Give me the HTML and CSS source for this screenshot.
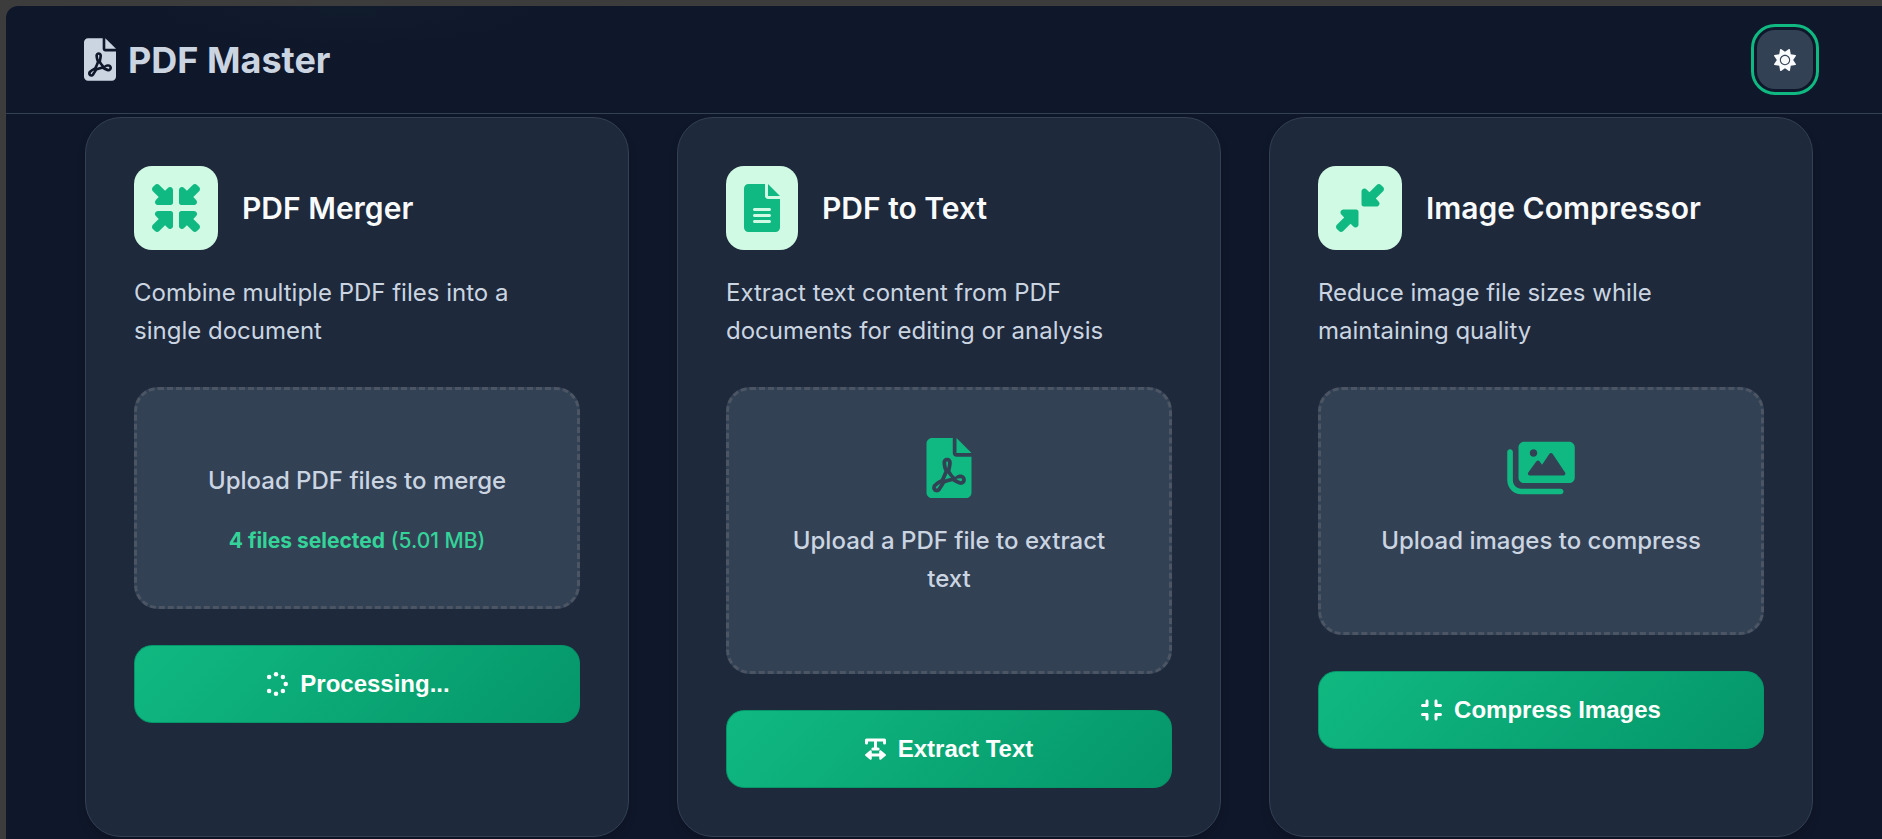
FILE: index.html
```html
<!DOCTYPE html>
<html lang="en">
<head>
<meta charset="utf-8">
<meta name="viewport" content="width=device-width, initial-scale=1">
<title>PDF Master</title>
<link rel="stylesheet" href="styles.css">
</head>
<body>
<svg class="sprite" aria-hidden="true">
  <symbol id="i-pdf" viewBox="0 0 384 512">
    <path d="M256 0v128h128L256 0z"/>
    <path fill-rule="evenodd" d="M224 128V0H48C21.500 0 0 21.500 0 48v416c0 26.500 21.500 48 48 48h288c26.500 0 48-21.500 48-48V160H256c-17.700 0-32-14.300-32-32zM292 312c24.260 0 44 19.740 44 44c0 24.670-18.940 44-43.130 44c-5.990 0-11.810-.95-17.220-2.800c-20.060-6.760-38.380-15.960-54.550-27.390c-23.880 5.110-45.460 11.520-64.310 19.100c-14.430 26.310-27.630 46.150-36.370 58.410C112.100 457.800 100.800 464 87.940 464C65.920 464 48 446.100 48 424.100c0-11.920 3.740-21.820 11.180-29.510c16.180-16.520 37.370-30.990 63.020-43.050c11.750-22.830 21.940-46.040 30.330-69.140C136.200 242.400 136 208.400 136 208c0-22.050 17.950-40 40-40c22.060 0 40 17.950 40 40c0 24.100-7.230 55.060-8.560 60.550c-1.020 4.030-2.040 8.030-3.160 12c10.070 19.310 23.100 36.570 39.170 51.440C260.500 314.800 275.100 312 292 312z"/>
    <path d="M184 208c0-4.400-3.600-8-8-8s-8 3.600-8 8c0 2.060.3 23.310 9.140 50.250C179.100 249.600 184 226.200 184 208zM80 422.400c0 9.660 10.470 11.970 14.380 6.380C99.270 421.900 108.800 408 120.100 388.600c-14.220 7.970-27.250 17.310-38.020 28.310C80.750 418.300 80 420.300 80 422.400zM156.500 354.600c17.980-6.500 36.130-11.440 52.920-15.190c-12.420-12.060-22.170-25.120-29.800-38.160C172.300 320.600 164.400 338.500 156.500 354.600zM292.900 368c6.100 0 11.100-5 11.100-12c0-6.600-5.400-12-12-12c-7.400 0-20.900 1.400-37.600 5.600c11.700 7.200 24.500 13.400 38.500 18.400z"/>
  </symbol>
  <symbol id="i-lines" viewBox="0 0 384 512">
    <path d="M256 0v128h128L256 0zM224 128L224 0H48C21.490 0 0 21.490 0 48v416C0 490.500 21.490 512 48 512h288c26.510 0 48-21.490 48-48V160h-127.100C238.300 160 224 145.700 224 128zM272 416h-160C103.200 416 96 408.800 96 400C96 391.200 103.200 384 112 384h160c8.840 0 16 7.160 16 16C288 408.800 280.800 416 272 416zM272 352h-160C103.200 352 96 344.800 96 336C96 327.200 103.200 320 112 320h160c8.840 0 16 7.160 16 16C288 344.800 280.800 352 272 352zM288 272C288 280.800 280.800 288 272 288h-160C103.200 288 96 280.800 96 272C96 263.200 103.200 256 112 256h160C280.800 256 288 263.200 288 272z"/>
  </symbol>
  <symbol id="i-merge" viewBox="0 0 512 512">
    <g id="merge-arrow"><path d="M312 224h136c12.940 0 24.620-7.800 29.560-19.750c4.970-11.970 2.220-25.720-6.940-34.870l-30.060-30.060l62.060-62.070c12.500-12.500 12.500-32.760 0-45.260l-22.620-22.620c-12.500-12.500-32.760-12.500-45.260 0l-62.060 62.070l-30.060-30.060c-9.160-9.140-22.870-11.840-34.870-6.940C295.800 39.390 288 51.060 288 64v136C288 213.300 298.700 224 312 224z"/></g>
    <use href="#merge-arrow" transform="rotate(90 256 256)"/>
    <use href="#merge-arrow" transform="rotate(180 256 256)"/>
    <use href="#merge-arrow" transform="rotate(270 256 256)"/>
  </symbol>
  <symbol id="i-shrink" viewBox="0 0 512 512">
    <path d="M216 272H80c-12.940 0-24.630 7.800-29.560 19.750C45.470 303.700 48.220 317.500 57.370 326.600l30.060 30.060l-78.060 78.070c-12.500 12.500-12.500 32.750 0 45.250l22.620 22.620c12.500 12.500 32.760 12.500 45.260 0l78.060-78.070l30.060 30.060c6.130 6.130 14.310 9.370 22.630 9.370c4.130 0 8.280-.79 12.250-2.430c11.970-4.950 19.750-16.620 19.750-29.560V296C240 282.700 229.300 272 216 272zM296 240h136c12.940 0 24.630-7.800 29.560-19.750c4.970-11.970 2.220-25.720-6.940-34.870l-30.060-30.060l78.060-78.070c12.500-12.500 12.500-32.760 0-45.260l-22.620-22.620c-12.500-12.500-32.760-12.500-45.260 0l-78.060 78.070l-30.060-30.060c-9.160-9.140-22.870-11.840-34.870-6.940c-11.970 4.950-19.750 16.620-19.750 29.560v136C272 229.300 282.700 240 296 240z"/>
  </symbol>
  <symbol id="i-images" viewBox="0 0 576 512">
    <path d="M528 32H144c-26.510 0-48 21.490-48 48v256c0 26.510 21.490 48 48 48H528c26.510 0 48-21.490 48-48v-256C576 53.490 554.500 32 528 32zM224 96c17.680 0 32 14.330 32 32S241.700 160 224 160c-17.670 0-32-14.330-32-32S206.300 96 224 96zM494.100 311.600C491.300 316.800 485.900 320 480 320H192c-6.020 0-11.530-3.380-14.260-8.750c-2.730-5.370-2.210-11.810 1.330-16.680l70-96C252.100 194.400 256.900 192 262 192c5.110 0 9.920 2.440 12.930 6.570l22.350 30.660l62.740-94.110C362.100 130.700 367.100 128 373.200 128c5.350 0 10.340 2.670 13.310 7.130l106.700 160C496.600 300 496.900 306.300 494.100 311.600zM456 432H120c-39.700 0-72-32.300-72-72v-240C48 106.800 37.250 96 24 96S0 106.800 0 120v240C0 426.200 53.830 480 120 480h336c13.250 0 24-10.750 24-24S469.300 432 456 432z"/>
  </symbol>
  <symbol id="i-compress" viewBox="0 0 448 512">
    <path d="M128 320H32c-17.690 0-32 14.310-32 32s14.310 32 32 32h64v64c0 17.690 14.310 32 32 32s32-14.310 32-32v-96C160 334.300 145.700 320 128 320zM416 320h-96c-17.690 0-32 14.310-32 32v96c0 17.690 14.310 32 32 32s32-14.310 32-32v-64h64c17.690 0 32-14.310 32-32S433.700 320 416 320zM320 192h96c17.690 0 32-14.310 32-32s-14.310-32-32-32h-64V64c0-17.690-14.310-32-32-32s-32 14.310-32 32v96C288 177.700 302.300 192 320 192zM128 32C110.300 32 96 46.310 96 64v64H32C14.310 128 0 142.300 0 160s14.310 32 32 32h96c17.690 0 32-14.310 32-32V64C160 46.310 145.700 32 128 32z"/>
  </symbol>
  <symbol id="i-text-width" viewBox="0 0 448 512">
    <path fill="none" stroke="currentColor" stroke-width="64" stroke-linecap="round" stroke-linejoin="round" d="M32 128V64H416V128M224 64V256M168 256H280M90 384H358"/>
    <path d="M144 304c0-21-25-31-40-18L9 368c-12 9-12 23 0 32l95 82c15 13 40 3 40-18zM304 304c0-21 25-31 40-18l95 82c12 9 12 23 0 32l-95 82c-15 13-40 3-40-18z"/>
  </symbol>
  <symbol id="i-spinner" viewBox="0 0 512 512">
    <circle cx="256" cy="48" r="48"/><circle cx="403" cy="109" r="48"/><circle cx="464" cy="256" r="48"/><circle cx="403" cy="403" r="48"/><circle cx="256" cy="464" r="48"/><circle cx="109" cy="403" r="48"/><circle cx="109" cy="109" r="48"/>
  </symbol>
  <symbol id="i-sun" viewBox="0 0 512 512">
    <path d="M256 160c-53.020 0-96 42.980-96 96S202.100 352 256 352s96-42.980 96-96S309 160 256 160zM509.300 347L446.100 256l63.150-91.010c6.330-9.130 1.100-21.740-9.830-23.720l-109-19.700l-19.700-109c-1.980-10.930-14.590-16.160-23.720-9.820L256 65.890L164.100 2.740c-9.130-6.330-21.740-1.110-23.720 9.820L121.600 121.600L12.560 141.300C1.630 143.200-3.600 155.900 2.740 164.100L65.890 256l-63.150 91.010c-6.330 9.130-1.110 21.740 9.820 23.720l109 19.700l19.700 109c1.980 10.930 14.590 16.160 23.720 9.820L256 446.100l91.010 63.150c9.130 6.330 21.750 1.110 23.720-9.820l19.700-109l109-19.700C510.400 368.800 515.600 356.100 509.300 347zM256 376c-66 0-120-54-120-120s54-120 120-120s120 54 120 120S322 376 256 376z"/>
  </symbol>
</svg>

<div class="app">
  <header class="topbar">
    <a class="logo" href="#">
      <svg class="icon logo-icon" aria-hidden="true"><use href="#i-pdf"/></svg>
      <span>PDF Master</span>
    </a>
    <button class="theme-toggle" type="button" aria-label="Toggle theme">
      <svg class="icon" aria-hidden="true"><use href="#i-sun"/></svg>
    </button>
  </header>

  <main class="tools">
    <section class="card">
      <div class="card-head">
        <span class="badge"><svg class="icon" aria-hidden="true"><use href="#i-merge"/></svg></span>
        <h2>PDF Merger</h2>
      </div>
      <p class="desc">Combine multiple PDF files into a single document</p>
      <button class="dropzone" type="button">
        <span class="prompt">Upload PDF files to merge</span>
        <span class="selected"><strong>4 files selected</strong> (5.01 MB)</span>
      </button>
      <button class="action" type="button">
        <svg class="icon" aria-hidden="true"><use href="#i-spinner"/></svg>
        <span>Processing...</span>
      </button>
    </section>

    <section class="card">
      <div class="card-head">
        <span class="badge"><svg class="icon page" aria-hidden="true"><use href="#i-lines"/></svg></span>
        <h2>PDF to Text</h2>
      </div>
      <p class="desc">Extract text content from PDF documents for editing or analysis</p>
      <button class="dropzone" type="button">
        <svg class="icon" aria-hidden="true"><use href="#i-pdf"/></svg>
        <span class="prompt">Upload a PDF file to extract text</span>
      </button>
      <button class="action" type="button">
        <svg class="icon narrow" aria-hidden="true"><use href="#i-text-width"/></svg>
        <span>Extract Text</span>
      </button>
    </section>

    <section class="card">
      <div class="card-head">
        <span class="badge"><svg class="icon" aria-hidden="true"><use href="#i-shrink"/></svg></span>
        <h2>Image Compressor</h2>
      </div>
      <p class="desc">Reduce image file sizes while maintaining quality</p>
      <button class="dropzone" type="button">
        <svg class="icon" aria-hidden="true"><use href="#i-images"/></svg>
        <span class="prompt">Upload images to compress</span>
      </button>
      <button class="action" type="button">
        <svg class="icon narrow" aria-hidden="true"><use href="#i-compress"/></svg>
        <span>Compress Images</span>
      </button>
    </section>
  </main>
</div>
</body>
</html>
```

FILE: styles.css
```css
:root {
  --frame: #3c3c3c;
  --bg: #0f172a;
  --card: #1e293b;
  --panel: #334155;
  --dash: #4b5563;
  --text: #cbd5e1;
  --heading: #f8fafc;
  --green: #10b981;
  --green-dark: #059669;
  --green-light: #34d399;
  --mint: #d1fae5;
}

* {
  box-sizing: border-box;
}

body {
  margin: 0;
  padding: 6px 0 0 6px;
  min-height: 100vh;
  display: flex;
  background: var(--frame);
  color: var(--text);
  font: 24px/1.6 Inter, "Noto Sans", sans-serif;
}

.sprite {
  display: none;
}

.icon {
  display: block;
  fill: currentColor;
}

.app {
  flex: 1;
  min-width: 0;
  border-top-left-radius: 12px;
  background: radial-gradient(ellipse 300px 60px at 340px 0, #101b2c, transparent), var(--bg);
}

.topbar {
  display: flex;
  align-items: center;
  justify-content: space-between;
  padding: 24px 69px 24px 78px;
  border-bottom: 1px solid var(--panel);
}

.logo {
  display: flex;
  align-items: center;
  gap: 12px;
  color: var(--text);
  font-size: 36px;
  font-weight: 700;
  line-height: 58px;
  text-decoration: none;
}

.logo-icon {
  width: 32px;
  height: 43px;
}

.theme-toggle {
  display: grid;
  place-items: center;
  width: 56px;
  height: 59px;
  padding: 0;
  border: 0;
  border-radius: 18px;
  outline: 3px solid var(--green);
  outline-offset: 3px;
  background: var(--panel);
  color: var(--heading);
}

.theme-toggle .icon {
  width: 22px;
  height: 22px;
}

.tools {
  display: grid;
  grid-template-columns: repeat(auto-fit, minmax(420px, 1fr));
  gap: 48px;
  padding: 3px 69px 0 79px;
}

.card {
  padding: 48px;
  border: 1px solid var(--panel);
  border-radius: 36px;
  background: var(--card);
  box-shadow: 0 6px 9px rgba(0, 0, 0, 0.15);
}

.card-head {
  display: flex;
  align-items: center;
  gap: 24px;
  margin-bottom: 24px;
}

.badge {
  padding: 18px;
  border-radius: 18px;
  background: var(--mint);
  color: var(--green);
}

.badge .icon {
  width: 48px;
  height: 48px;
}

.badge .page {
  width: 36px;
}

h2 {
  margin: 0;
  color: var(--heading);
  font-size: 30px;
  font-weight: 600;
}

.desc {
  margin: 0 0 36px;
}

.dropzone {
  display: flex;
  flex-direction: column;
  align-items: center;
  width: 100%;
  margin-bottom: 36px;
  padding: 48px;
  border: 3px dashed var(--dash);
  border-radius: 24px;
  background: var(--panel);
  color: inherit;
  font: inherit;
}

.dropzone .icon {
  width: 68px;
  height: 60px;
  color: var(--green);
}

.prompt {
  margin: 24px 0;
  font-weight: 500;
}

.selected {
  color: var(--green-light);
  font-size: 21px;
  font-weight: 500;
}

.action {
  display: flex;
  align-items: center;
  justify-content: center;
  gap: 12px;
  width: 100%;
  min-height: 78px;
  border: 1px solid var(--green-dark);
  border-radius: 18px;
  background: linear-gradient(135deg, var(--green), var(--green-dark));
  color: #fff;
  font: 700 24px/28px "Liberation Sans", Arial, sans-serif;
}

.action .icon {
  width: 24px;
  height: 24px;
}

.action .narrow {
  width: 21px;
}
```
